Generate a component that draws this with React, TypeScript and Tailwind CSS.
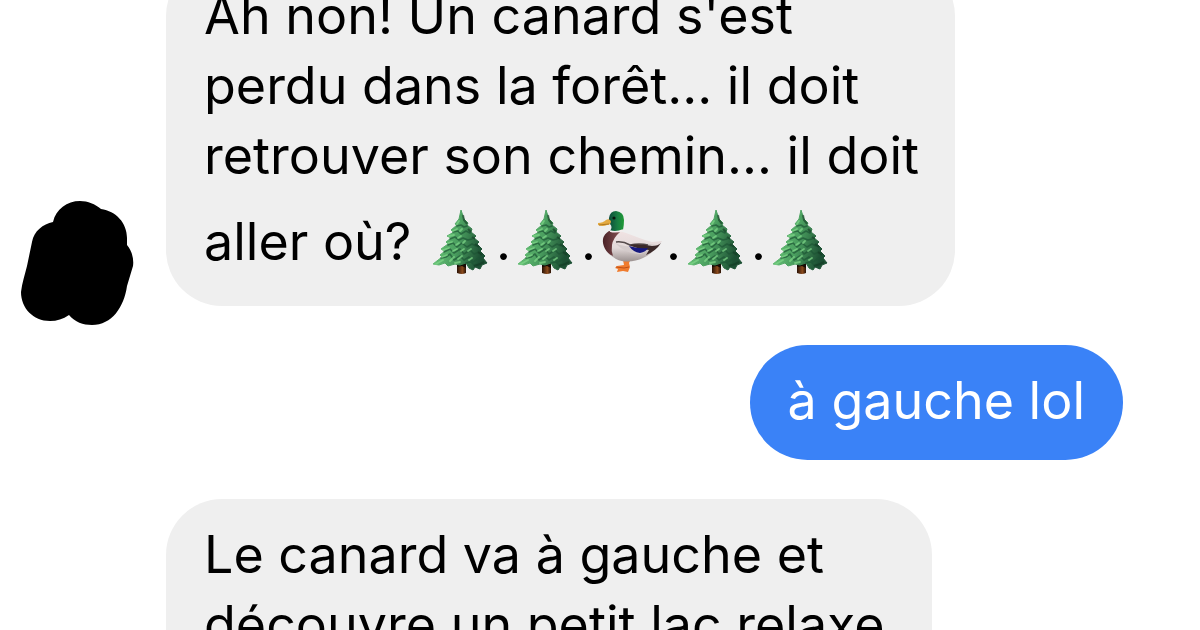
import type { ReactNode } from "react";

function Tree() {
  return (
    <svg role="img" aria-label="sapin" viewBox="0 0 70 70" className="inline-block size-[70px] shrink-0">
      <defs>
        <linearGradient id="needles" x1="0" x2="1" y1="0" y2="0.25">
          <stop offset="0.1" stopColor="#6cc87a" />
          <stop offset="0.55" stopColor="#4a9e5f" />
          <stop offset="1" stopColor="#1d5034" />
        </linearGradient>
        <linearGradient id="trunk" x1="0" x2="1" y1="0" y2="0">
          <stop offset="0" stopColor="#2a1205" />
          <stop offset="0.6" stopColor="#8a4a1c" />
          <stop offset="1" stopColor="#2a1205" />
        </linearGradient>
      </defs>
      <path d="M31 54h9v12q-4 2-9 0z" fill="url(#trunk)" />
      <path d="M31 56h9v5l-4-2-5 1z" fill="#150b04" />
      <path
        d="M35 3L33 12L29 17L31 18L25 23L28 25L21 29L25 31L20 35L22 37L15 42L19 44L14 48L16 50L7 57L13 58L19 56L22 59L29 57L34 58L40 56L43 61L47 63L49 60L54 62L56 58L61 56L57 51L59 49L54 44L56 42L51 37L53 35L48 31L50 29L45 25L46 22L41 18L42 16L38 12Z"
        fill="url(#needles)"
        stroke="url(#needles)"
        strokeWidth="1"
        strokeLinejoin="round"
      />
      <g fill="none" stroke="#1d5535" strokeWidth="1.6" strokeLinecap="round" strokeLinejoin="round" opacity="0.7">
        <path d="M31 19l4-1 3 2 3-1M27 25l5-1 3 3 5-3 4 2M24 32l5-2 4 3 4-2 5 2 4-1" />
        <path d="M22 38l5-2 4 4 5-4 5 4 5-3 4 2M18 45l6-3 4 4 6-4 4 5 6-4 4 4 5-2" />
        <path d="M15 51l5-1 4-3 4 6 6-4 4 4 5-3 4 5 6-4M40 56l5-1 3 3 6-2" />
      </g>
      <g fill="none" stroke="#7dd587" strokeWidth="1.8" strokeLinecap="round" opacity="0.75">
        <path d="M33 14l-2 3M31 22l-4 2M36 22l-2 2M28 28l-5 1M35 29l-3 2M26 35l-4 1M33 36l-3 2M39 34l-2 2" />
        <path d="M23 41l-6 2M31 42l-4 2M38 42l-3 2M21 48l-5 2M17 53l-7 4M28 50l-4 4M36 49l-4 3M34 55l-5 1M45 42l-3 2M46 51l-3 2" />
      </g>
      <path d="M37 8l1 5 3 4M42 22l3 3M46 30l3 2M49 37l4 3M52 45l4 3M48 59l6-2 4-2" fill="none" stroke="#123823" strokeWidth="2" opacity="0.6" />
    </svg>
  );
}

function Duck() {
  return (
    <svg role="img" aria-label="canard" viewBox="0 0 70 70" className="inline-block size-[70px] shrink-0">
      <defs>
        <linearGradient id="plumage" x1="0" x2="0" y1="0" y2="1">
          <stop offset="0" stopColor="#f1e3e3" />
          <stop offset="0.55" stopColor="#e3dada" />
          <stop offset="1" stopColor="#9b9190" />
        </linearGradient>
        <linearGradient id="head" x1="0" x2="1" y1="0" y2="0">
          <stop offset="0" stopColor="#0c4a3b" />
          <stop offset="0.6" stopColor="#198043" />
          <stop offset="1" stopColor="#1f9a35" />
        </linearGradient>
        <linearGradient id="breast" x1="0" x2="1" y1="0" y2="0">
          <stop offset="0" stopColor="#4a2226" />
          <stop offset="1" stopColor="#855052" />
        </linearGradient>
      </defs>
      <path d="M27 53l1 5-7 1-2 2 3 1-1 3 6-1 5 1 2-5-1-4 2-4z" fill="#f07c2e" />
      <path d="M20 60l8 1 5-1" fill="none" stroke="#bf5018" strokeWidth="1" />
      <path
        d="M13 25C19 23 25 24 30 26C39 29 48 33 56 35L66 34Q63 40 58 43Q54 48 47 51C39 55 28 56 20 52C11 47 6 40 8 33Q9 27 13 25Z"
        fill="url(#plumage)"
      />
      <path d="M13 24Q20 23 24 25Q17 31 16 38Q15 44 17 49C10 46 6 38 7 32Q8 27 13 24Z" fill="url(#breast)" />
      <path d="M19 36Q28 41 38 38Q48 35 60 38Q53 43 45 47Q31 48 19 36Z" fill="#d4cbcb" />
      <path d="M20 35Q27 34 34 38Q43 36 52 38" fill="none" stroke="#554b4b" strokeWidth="1.5" />
      <path d="M33 38Q43 36 56 39Q62 39 65 36Q60 44 50 48L53 43Q41 42 33 38Z" fill="#3b2929" />
      <path d="M33 39Q43 42 52 41Q50 45 44 46Q37 45 33 39Z" fill="#16187f" />
      <path d="M13 11Q14 4 20 4Q28 5 28 13Q28 18 27 23Q20 26 14 24Q17 20 14 17Q12 14 13 11Z" fill="url(#head)" />
      <path d="M14 24Q20 26 27 23" fill="none" stroke="#f5eeee" strokeWidth="1.5" />
      <path d="M2 16Q7 16 10 13Q13 11 15 14Q15 18 11 18Q7 20 2 18Z" fill="#e3a940" />
      <path d="M3 18l10-1" fill="none" stroke="#b07820" strokeWidth="1" />
      <circle cx="18" cy="11" r="1.6" fill="#08170f" />
    </svg>
  );
}

function Avatar() {
  return (
    <svg role="img" aria-label="avatar masqué" viewBox="0 0 113 126" className="-mb-5 h-[126px] w-[113px] shrink-0">
      <path
        d="M59 1C67 1 74 4 80 9C95 11 106 23 106 38L106 45C111 51 113 59 112 66L106 86C103 107 91 125 71 125C62 125 54 122 48 115C42 119 36 121 29 121C12 121 0 108 0 92C1 83 4 74 6 66L11 42C13 31 22 24 32 22C35 9 46 1 59 1Z"
        fill="#000"
      />
    </svg>
  );
}

function Received({ children, className }: { children: ReactNode; className: string }) {
  return (
    <div className={`w-full rounded-[56px] bg-[#efefef] pt-[21px] pr-6 pb-6 pl-[38px] text-black ${className}`}>
      {children}
    </div>
  );
}

export default function App() {
  return (
    <main className="h-screen overflow-hidden bg-white font-['Inter','Liberation_Sans',sans-serif] text-[52px] leading-[70px]">
      <div className="-mt-10 flex flex-col gap-[39px]">
        <div className="flex items-end gap-8 pl-[21px]">
          <Avatar />
          <Received className="max-w-[789px]">
            <p>
              Ah non! Un canard s'est
              <br />
              perdu dans la forêt... il doit
              <br />
              retrouver son chemin... il doit
            </p>
            <p className="flex items-center whitespace-pre pt-4 pb-[5px]">
              aller où? <Tree />.<Tree />.<Duck />.<Tree />.<Tree />
            </p>
          </Received>
        </div>

        <div className="flex justify-end pr-[77px]">
          <p className="rounded-[58px] bg-[#3a82f7] px-[38px] pt-[21px] pb-6 text-white">à gauche lol</p>
        </div>

        <div className="flex pl-[166px]">
          <Received className="max-w-[766px]">
            <p>
              Le canard va à gauche et
              <br />
              découvre un petit lac relaxe
            </p>
          </Received>
        </div>
      </div>
    </main>
  );
}
